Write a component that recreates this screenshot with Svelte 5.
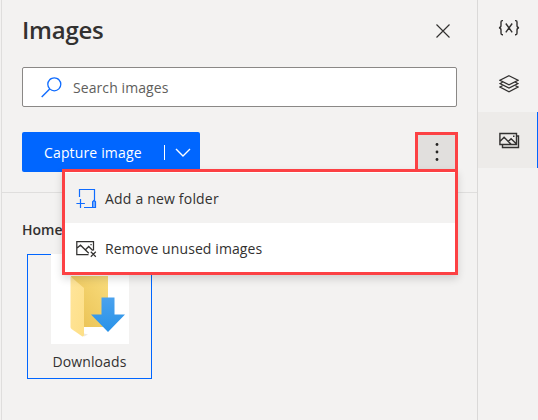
<script>
  let query = $state('');
</script>

<main class="window">
  <section class="panel">
    <header class="heading">
      <h1>Images</h1>
      <button class="close" aria-label="Close">
        <svg width="14" height="14" viewBox="0 0 14 14"><path d="M.5.5l13 13M13.5.5l-13 13" fill="none" stroke="#323130" stroke-width="1.15" /></svg>
      </button>
    </header>

    <label class="search">
      <svg width="21" height="21" viewBox="0 0 21 21"><circle cx="13.3" cy="7.3" r="6.5" fill="none" stroke="#0f6cff" stroke-width="1.3" /><path d="M8.7 12L.7 20" stroke="#0f6cff" stroke-width="1.4" /></svg>
      <input bind:value={query} placeholder="Search images" aria-label="Search images" />
    </label>

    <div class="toolbar">
      <button class="capture">
        <span class="caption">Capture image</span>
        <span class="split"></span>
        <svg width="16" height="9" viewBox="0 0 16 9"><path d="M1 1l7 7 7-7" fill="none" stroke="#fff" stroke-width="1.4" /></svg>
      </button>
      <div class="more-wrap">
        <button class="more" aria-label="More actions">
          <svg width="4" height="20" viewBox="0 0 4 20"><g fill="#252423"><circle cx="2" cy="2.5" r="1.4" /><circle cx="2" cy="10" r="1.4" /><circle cx="2" cy="17.5" r="1.4" /></g></svg>
        </button>
        <div class="menu" role="menu">
          <div class="item hovered" role="menuitem" tabindex="0">
            <svg width="21" height="21" viewBox="0 0 21 21" fill="none" stroke="#0f6cff" stroke-width="1.2"><path d="M3.500 9V1.500h15v11M8 19.500h9M4.500 11v9M.4 15.500h8.500" /><path d="M16.6 19.500v-5.700l1.500-1.500 1.400 1.500v5.700z" fill="#85b4fa" /></svg>
            <span class="add-text">Add a new folder</span>
          </div>
          <div class="item second" role="menuitem" tabindex="0">
            <svg width="21" height="18" viewBox="0 0 21 18" fill="none" stroke="#323130" stroke-width="1.25"><path d="M12.500 14.500H.8V1.500h16.700v9M.8 8.2l3.700-3 8.300 8M9.700 9.500l3-3 4 4M14.800 11.700l5 5M19.800 11.700l-5 5" /><path d="M14.4 4.500h1.300" /></svg>
            <span class="remove-text">Remove unused images</span>
          </div>
        </div>
      </div>
    </div>

    <div class="content">
      <h2>Home</h2>
      <div class="tile">
        <div class="thumb">
          <svg width="78" height="90" viewBox="0 0 78 90">
            <defs>
              <linearGradient id="back" x1="0" y1="1" x2="1" y2="0"><stop stop-color="#e8bf50" /><stop offset="1" stop-color="#f9dc7c" /></linearGradient>
              <linearGradient id="front" x1="0" y1="0" x2="1" y2="1"><stop stop-color="#ffe59b" /><stop offset="1" stop-color="#fddf87" /></linearGradient>
              <linearGradient id="arrow" x1="0" y1="0" x2="0" y2="1"><stop stop-color="#4aa2ee" /><stop offset="1" stop-color="#2892e8" /></linearGradient>
            </defs>
            <path d="M20 22h37v51H30z" fill="url(#back)" />
            <path d="M19.5 22.5L33 34v47q0 2-2 1.2L20.5 75q-1-.8-1-2z" fill="url(#front)" />
            <path d="M33 82.5l4-2-4-1z" fill="#ece9e1" />
            <path d="M50.5 43.5h13v17H74L57 78 40 60.500h10.500z" fill="url(#arrow)" />
          </svg>
        </div>
        <span class="name">Downloads</span>
      </div>
    </div>
  </section>

  <nav class="rail">
    <button class="tab" aria-label="Variables">
      <svg width="22" height="18" viewBox="0 0 22 18" fill="none" stroke="#323130" stroke-width="1.4"><path d="M5 1.6H4.300Q3 1.600 3 3v3.500Q3 8.500 1 8.700q2 .2 2 2.300v3.300q0 1.400 1.300 1.400H5M17 1.600h.7Q19 1.600 19 3v3.500q0 2 2 2.200-2 .2-2 2.300v3.300q0 1.400-1.300 1.400H17M7.800 4.500l6.400 8.800M14.200 4.500l-6.400 8.800" /></svg>
    </button>
    <button class="tab" aria-label="Layers">
      <svg width="20" height="18" viewBox="0 0 20 18" fill="none" stroke="#323130" stroke-width="1.25"><path d="M10 .8l9 4.500-9 4.500-9-4.500zM3.500 7.200L1 8.600l9 4.500 9-4.500-2.500-1.400M3.500 10.700L1 12l9 4.800 9-4.800-2.500-1.300" /></svg>
    </button>
    <button class="tab active" aria-label="Images">
      <svg width="21" height="17" viewBox="0 0 21 17" fill="none" stroke="#323130" stroke-width="1.4"><path d="M.9 1.500h16.600v11H.9zM.9 9.500l4.200-4.200 7 7M9.300 9.500l2.800-2.800 5.400 5.400M17.700 4h1.800v11.500H3.500v-3" /><path d="M14 4.300h1.500" /></svg>
    </button>
  </nav>
</main>

<style>
  :global(body) { margin: 0; overflow: hidden; }
  * { box-sizing: border-box; }
  .window { display: flex; width: 538px; height: 420px; padding-left: 1px; background: #f3f2f1; color: #323130; font-family: "Open Sans", "Noto Sans", sans-serif; font-size: 14px; overflow: hidden; }
  .panel { width: 477px; border-left: 1px solid #dfdedd; border-right: 1px solid #dad9d8; }
  button { padding: 0; border: 0; background: none; font: inherit; }
  svg { display: block; flex: none; }
  .heading { display: flex; justify-content: space-between; align-items: center; height: 67px; padding: 0 27px 6px 20px; }
  h1 { margin: 0; padding-bottom: 2px; font-size: 24px; line-height: 32px; font-weight: 600; letter-spacing: -.25px; }
  .close { width: 14px; height: 14px; }
  .search { display: flex; align-items: center; width: 435px; height: 40px; margin-left: 20px; padding-left: 18px; gap: 11px; background: #fff; border: 1px solid #8a8886; border-radius: 2px; }
  input { width: 300px; height: 24px; padding: 0; border: 0; outline: 0; background: none; font: inherit; letter-spacing: .08px; color: #605e5c; }
  input::placeholder { color: #605e5c; opacity: 1; }
  .toolbar { display: flex; justify-content: space-between; align-items: flex-start; height: 86px; padding: 25px 19px 0 20px; border-bottom: 1px solid #dfdedd; }
  .capture { display: flex; align-items: center; width: 178px; height: 40px; padding-left: 22px; border-radius: 2px; background: #0066ff; color: #fff; }
  .caption { width: 120px; text-align: left; white-space: nowrap; letter-spacing: .15px; }
  .split { width: 1px; height: 15px; margin-right: 10px; background: #fff; }
  .more-wrap { position: relative; width: 43px; height: 40px; }
  .more { display: flex; align-items: center; justify-content: center; width: 43px; height: 40px; border: 3px solid #fc4144; background: #e1dfdd; }
  .menu { position: absolute; top: 37px; right: 0; z-index: 2; width: 396px; height: 106px; border: 3px solid #fc4144; background: #fff; box-shadow: 0 4px 8px rgba(0, 0, 0, .14); }
  .item { display: flex; align-items: center; height: 49px; padding-left: 11px; gap: 8px; white-space: nowrap; }
  .hovered { height: 50px; margin-top: 1px; background: #f3f2f1; }
  .second { padding-top: 2px; }
  .add-text { letter-spacing: .19px; }
  .remove-text { letter-spacing: .1px; }
  .content { padding: 25px 0 0 20px; }
  h2 { margin: 0; font-size: 14px; line-height: 24px; font-weight: 600; }
  .tile { display: flex; flex-direction: column; align-items: center; width: 125px; height: 125px; margin: 12px 0 0 5px; box-shadow: inset 0 0 0 1px #0066ff; }
  .thumb { position: relative; width: 78px; height: 90px; background: #fff; }
  .name { margin-top: 8px; line-height: 20px; white-space: nowrap; letter-spacing: .1px; }
  .rail { display: flex; flex-direction: column; width: 60px; }
  .tab { display: flex; align-items: center; justify-content: center; width: 60px; height: 56px; padding-left: 2px; }
  .active { padding-left: 3px; background: #edebe9; border-right: 1px solid #0066ff; }
</style>
